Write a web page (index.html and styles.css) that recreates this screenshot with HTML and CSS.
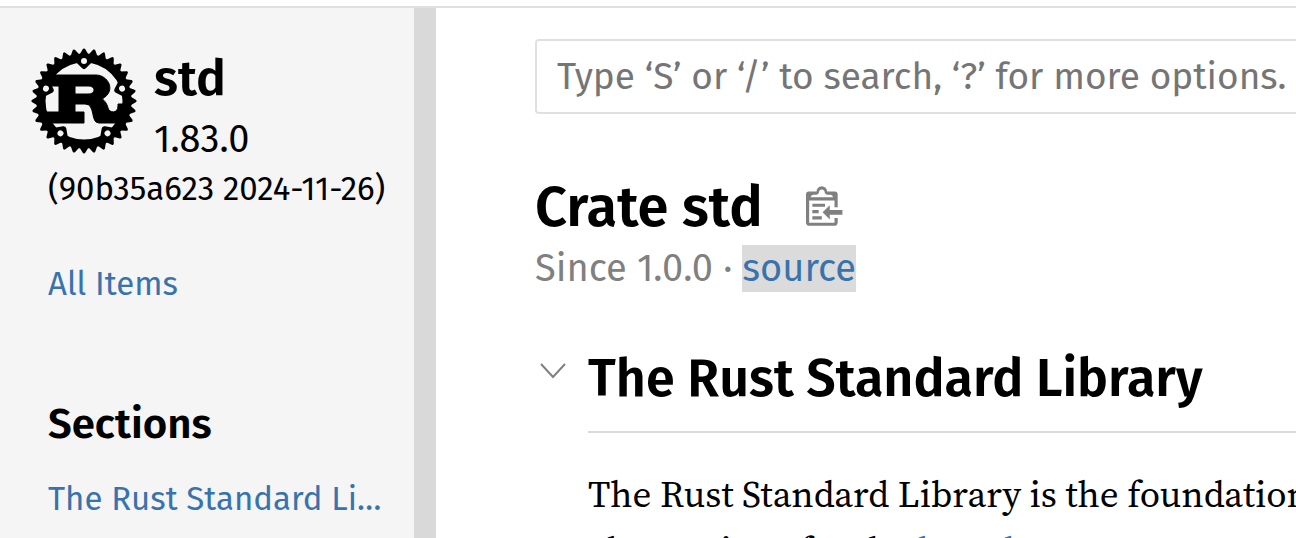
FILE: index.html
```html
<!DOCTYPE html>
<html lang="en">
<head>
<meta charset="utf-8">
<title>std - Rust</title>
<link rel="stylesheet" href="styles.css">
</head>
<body>
<div class="page">
  <nav class="sidebar">
    <div class="crate">
      <a class="logo" href="#" aria-label="Rust">
        <svg viewBox="0 0 106 106" width="106" height="106">
          <defs>
            <polygon id="cog" points="46,3 51,0 46,-3" stroke-width="3"/>
            <g id="cogs4"><use href="#cog"/><use href="#cog" transform="rotate(11.25)"/><use href="#cog" transform="rotate(22.5)"/><use href="#cog" transform="rotate(33.75)"/></g>
            <g id="cogs8"><use href="#cogs4"/><use href="#cogs4" transform="rotate(45)"/></g>
            <polygon id="mount" points="-7,-42 0,-35 7,-42" stroke-width="6"/>
            <circle id="hole" cy="-40" r="3" fill="#000" stroke="none"/>
            <mask id="holes" maskUnits="userSpaceOnUse" x="-60" y="-60" width="120" height="120">
              <rect x="-60" y="-60" width="120" height="120" fill="#fff" stroke="none"/>
              <use href="#hole"/><use href="#hole" transform="rotate(72)"/><use href="#hole" transform="rotate(144)"/><use href="#hole" transform="rotate(216)"/><use href="#hole" transform="rotate(288)"/>
            </mask>
          </defs>
          <g transform="translate(53 53)" stroke="#000" stroke-linejoin="round">
            <path stroke-width="1" d="M-9-15H4C12-15 12-7 4-7H-9ZM-40 22H0V11H-9V3H1C12 3 6 22 15 22H40V3H34V5C34 13 25 12 24 7 23 2 19-2 18-2 33-10 24-26 12-26H-35V-15H-25V11H-40Z"/>
            <g mask="url(#holes)">
              <circle r="43" fill="none" stroke-width="9"/>
              <use href="#cogs8"/><use href="#cogs8" transform="rotate(90)"/><use href="#cogs8" transform="rotate(180)"/><use href="#cogs8" transform="rotate(270)"/>
              <use href="#mount"/><use href="#mount" transform="rotate(72)"/><use href="#mount" transform="rotate(144)"/><use href="#mount" transform="rotate(216)"/><use href="#mount" transform="rotate(288)"/>
            </g>
          </g>
        </svg>
      </a>
      <div class="crate-text">
        <h2 class="crate-name">std</h2>
        <span class="version">1.83.0</span>
      </div>
    </div>
    <div class="build">(90b35a623 2024-11-26)</div>
    <a class="side-link all-items" href="#">All Items</a>
    <h3 class="side-title">Sections</h3>
    <a class="side-link" href="#">The Rust Standard Library</a>
  </nav>
  <div class="resizer"></div>
  <main class="content">
    <form class="search"><input class="search-input" type="search" aria-label="Search" placeholder="Type ‘S’ or ‘/’ to search, ‘?’ for more options."></form>
    <div class="heading">
      <h1 class="title">Crate std</h1>
      <button class="copy" type="button" aria-label="Copy item path">
        <svg viewBox="0 0 24 25" width="38" height="40" fill="currentColor"><path d="M18 20h2v3c0 1-1 2-2 2H2c-.998 0-2-1-2-2V5c0-.911.755-1.667 1.667-1.667h5A3.323 3.323 0 0110 0a3.323 3.323 0 013.333 3.333h5C19.245 3.333 20 4.09 20 5v8.333h-2V9H2v14h16v-3zM3 7h14c0-.911-.793-1.667-1.75-1.667H13.5c-.957 0-1.75-.755-1.75-1.666C11.75 2.755 10.957 2 10 2s-1.75.755-1.75 1.667c0 .911-.793 1.666-1.75 1.666H4.75C3.793 5.333 3 6.09 3 7z"/><path d="M4 19h6v2H4zM12 11H4v2h8zM4 17h4v-2H4zM15 15v-3l-4.5 4.5L15 21v-3l8.027-.032L23 15z"/></svg>
      </button>
    </div>
    <div class="since">Since 1.0.0 · <a class="source" href="#">source</a></div>
    <section class="doc">
      <button class="toggle" type="button" aria-label="Collapse"><svg viewBox="0 0 26 16" width="26" height="16" fill="none" stroke="currentColor" stroke-width="2"><path d="M1 1L13 14L25 1"/></svg></button>
      <div class="doc-body">
        <h2 class="doc-title">The Rust Standard Library</h2>
        <p class="prose">The Rust Standard Library is the foundation of portable<br>abstractions for the <a class="prose-link" href="#">broader Rust</a></p>
      </div>
    </section>
  </main>
</div>
</body>
</html>
```
FILE: styles.css
```css
* { box-sizing: border-box; }
body { margin: 0; background: #fff; color: #000; font-family: "Fira Sans", "Noto Sans", sans-serif; overflow: hidden; }
h1, h2, h3, p { margin: 0; }
a { color: #3873ad; text-decoration: none; }
svg { display: block; }
button { padding: 0; border: 0; background: none; color: #808080; }

.page { display: flex; height: calc(100vh - 6px); margin-top: 6px; border-top: 2px solid #e0e0e0; overflow: hidden; }
.sidebar { flex: 0 0 414px; min-width: 0; padding: 40px 32px 0 48px; background: #f5f5f5; }
.crate { display: flex; gap: 17px; margin-left: -17px; }
.crate-name { font-size: 50px; font-weight: 600; line-height: 60px; }
.version { font-size: 38px; line-height: 62px; }
.build { font-size: 33px; line-height: 38px; white-space: nowrap; }
.side-link { display: block; overflow: hidden; font-size: 33px; line-height: 48px; white-space: nowrap; text-overflow: ellipsis; }
.all-items { margin-top: 52px; }
.side-title { margin: 88px 0 23px; font-size: 42px; font-weight: 600; line-height: 56px; }
.resizer { flex: 0 0 22px; background: #d9d9d9; }

.content { flex: 1 0 1400px; padding: 31px 0 0 99px; }
.search-input { display: block; width: 100%; height: 75px; padding: 0 20px; border: 2px solid #e0e0e0; border-radius: 4px; background: #fff; font: 37px "Fira Sans", "Noto Sans", sans-serif; }
.search-input::placeholder { color: #757575; opacity: 1; }
.heading { display: flex; align-items: center; gap: 43px; margin-top: 56px; }
.title { font-size: 56px; font-weight: 600; line-height: 75px; }
.copy { padding-bottom: 4px; }
.since { color: #808080; font-size: 38px; line-height: 47px; }
.source { display: inline-block; background: #dbdbdb; }
.doc { display: flex; gap: 22px; margin-top: 56px; padding-left: 5px; }
.toggle { align-self: flex-start; margin-top: 15px; }
.doc-body { flex: 1; }
.doc-title { padding-bottom: 21px; border-bottom: 2px solid #dadada; font-size: 52px; font-weight: 600; line-height: 62px; }
.prose { margin-top: 33px; font: 37px/56px "Source Serif 4", "Liberation Serif", serif; white-space: nowrap; }
```
